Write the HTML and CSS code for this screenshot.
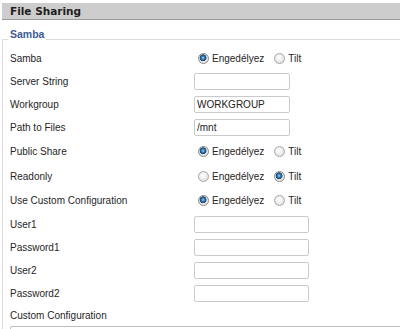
FILE: index.html
```html
<!DOCTYPE html>
<html>
<head>
<meta charset="utf-8">
<link rel="stylesheet" href="styles.css">
</head>
<body>
<div class="page">
  <div class="titlebar">File Sharing</div>
  <fieldset class="group">
    <legend class="legend">Samba</legend>
    <div class="form">
      <div class="row r-first">
        <span class="lbl">Samba</span>
        <span class="radios">
          <input type="radio" class="rd" name="samba" checked><span class="opt">Engedélyez</span>
          <input type="radio" class="rd rd2" name="samba"><span class="opt">Tilt</span>
        </span>
      </div>
      <div class="row r-in">
        <span class="lbl">Server String</span>
        <input type="text" class="txt" value="">
      </div>
      <div class="row r-in">
        <span class="lbl">Workgroup</span>
        <input type="text" class="txt" value="WORKGROUP">
      </div>
      <div class="row r-in">
        <span class="lbl">Path to Files</span>
        <input type="text" class="txt" value="/mnt">
      </div>
      <div class="row r-rd1">
        <span class="lbl">Public Share</span>
        <span class="radios">
          <input type="radio" class="rd" name="pub" checked><span class="opt">Engedélyez</span>
          <input type="radio" class="rd rd2" name="pub"><span class="opt">Tilt</span>
        </span>
      </div>
      <div class="row r-rd">
        <span class="lbl">Readonly</span>
        <span class="radios">
          <input type="radio" class="rd" name="ro"><span class="opt">Engedélyez</span>
          <input type="radio" class="rd rd2" name="ro" checked><span class="opt">Tilt</span>
        </span>
      </div>
      <div class="row r-rd">
        <span class="lbl">Use Custom Configuration</span>
        <span class="radios">
          <input type="radio" class="rd" name="ucc" checked><span class="opt">Engedélyez</span>
          <input type="radio" class="rd rd2" name="ucc"><span class="opt">Tilt</span>
        </span>
      </div>
      <div class="row r-rd">
        <span class="lbl">User1</span>
        <input type="text" class="txt wide" value="">
      </div>
      <div class="row r-in">
        <span class="lbl">Password1</span>
        <input type="password" class="txt wide" value="">
      </div>
      <div class="row r-in">
        <span class="lbl">User2</span>
        <input type="text" class="txt wide" value="">
      </div>
      <div class="row r-in">
        <span class="lbl">Password2</span>
        <input type="password" class="txt wide" value="">
      </div>
      <div class="row r-label">
        <span class="lbl">Custom Configuration</span>
      </div>
      <textarea class="area"></textarea>
    </div>
  </fieldset>
</div>
</body>
</html>
```
FILE: styles.css
```css
html, body {
  margin: 0;
  padding: 0;
  background: #fff;
  overflow: hidden;
}
body {
  width: 400px;
  height: 329px;
}
.page {
  padding: 3px 0 0 2px;
  width: 398px;
  height: 326px;
  overflow: hidden;
}
.titlebar {
  height: 16px;
  line-height: 16px;
  background: #cdcdcd;
  border-bottom: 1px solid #9a9a9a;
  padding-left: 8px;
  font-family: "DejaVu Sans", sans-serif;
  font-weight: bold;
  font-size: 10.5px;
  color: #1e1e1e;
}
.group {
  margin: 8px 0 0 0;
  padding: 0 0 0 5px;
  border: 1px solid #dcdcdc;
  border-right: none;
  border-bottom: none;
  min-width: 0;
}
.legend {
  padding: 0 2px 10px 2px;
  line-height: 12px;
  font-family: "Liberation Sans", Arial, sans-serif;
  font-weight: bold;
  font-size: 10.5px;
  color: #3d5b94;
}
.form {
  margin-top: -3px;
  font-family: "Liberation Sans", Arial, sans-serif;
  font-size: 10px;
  color: #262626;
}
.row {
  display: flex;
  align-items: center;
  padding-left: 2px;
  height: 23px;
}
.r-rd1 { height: 25px; }
.r-rd { height: 24px; }
.r-label { height: 20px; }
.lbl {
  width: 184px;
  flex: none;
}
.radios {
  display: flex;
  align-items: center;
}
.rd {
  -webkit-appearance: none;
  appearance: none;
  width: 11px;
  height: 11px;
  margin: 0 3px 0 4px;
  border-radius: 50%;
  border: 1px solid #a8a8a8;
  background: radial-gradient(circle at 45% 40%, #ffffff 0, #f0f0f0 40%, #d4d4d4 100%);
  box-sizing: border-box;
}
.rd:checked {
  border-color: #8a8a8a;
  background: radial-gradient(circle at 45% 42%, #a9d8f5 0, #3f86c0 1.4px, #1d4f80 2.8px, #2a4a6a 3.2px, #e2e2e2 3.7px, #f2f2f2 100%);
}
.rd2 {
  margin-left: 10px;
}
.opt {
  color: #262626;
}
.txt {
  width: 96px;
  height: 17px;
  box-sizing: border-box;
  margin: 0;
  padding: 0 2px;
  border: 1px solid #cbcbcb;
  border-radius: 2px;
  font-family: "Liberation Sans", Arial, sans-serif;
  font-size: 10px;
  color: #222;
  background: #fff;
  outline: none;
}
.wide {
  width: 115px;
}
.area {
  display: block;
  margin: 1px 0 0 2px;
  width: 420px;
  height: 60px;
  border: 1px solid #bdbdbd;
  border-radius: 2px;
  box-sizing: border-box;
  resize: none;
}
```
